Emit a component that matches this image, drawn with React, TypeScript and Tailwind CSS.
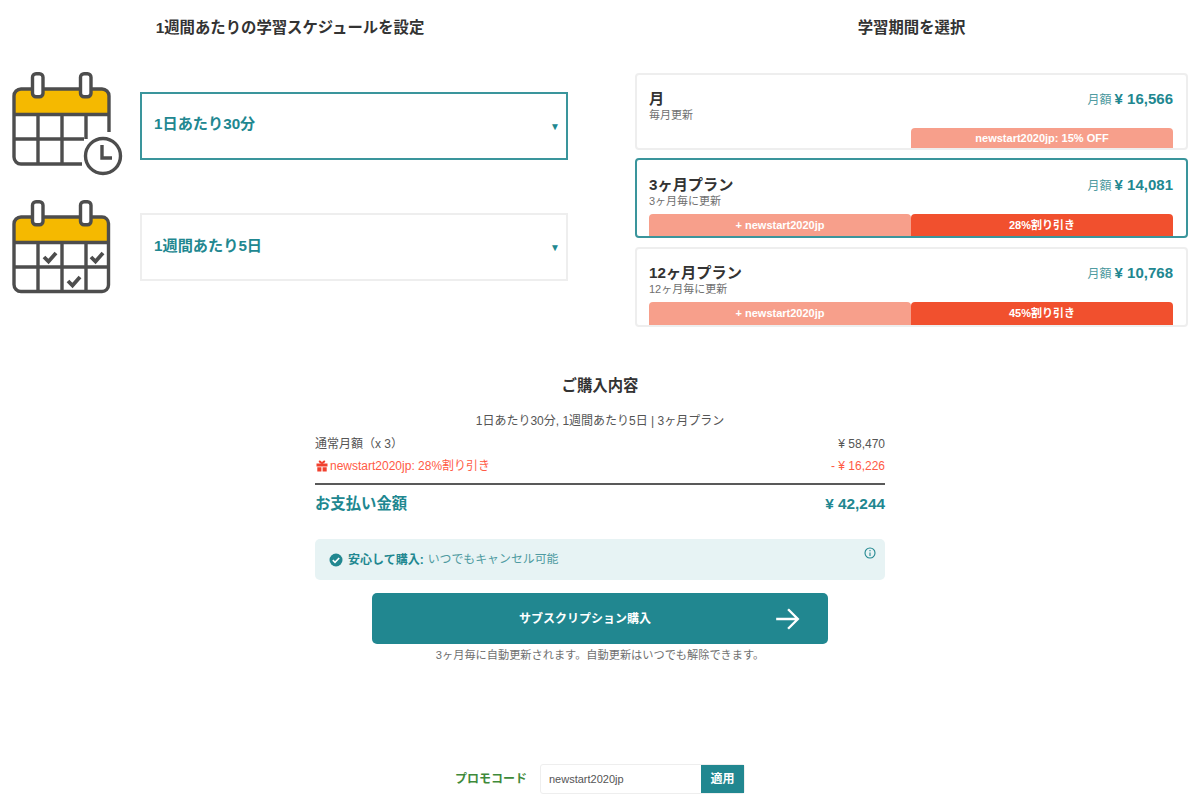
import React from "react";

const font = { fontFamily: '"Liberation Sans","Noto Sans CJK JP",sans-serif' };
const INK = "#4d4d4d";

function Pins() {
  return (
    <g fill="#fff" stroke={INK} strokeWidth="3.4">
      <rect x="20.500" y="1.700" width="10.500" height="23" rx="3.500" />
      <rect x="68.500" y="1.700" width="10.500" height="23" rx="3.500" />
    </g>
  );
}

function CalendarClock() {
  return (
    <svg viewBox="0 0 112 104" className="block w-[112px] h-[104px]" fill="none">
      <path d="M2 24 a6 6 0 0 1 6-6 H91 a6 6 0 0 1 6 6 V42 H2 Z" fill="#f5b900" />
      <g stroke={INK} strokeWidth="3.400">
        <path d="M70 92 H9 a7 7 0 0 1-7-7 V24 a7 7 0 0 1 7-7 H20 M31 17 H69 M79 17 H90 a7 7 0 0 1 7 7 V60" />
        <path d="M2 42.500 H97 M2 67 H72 M26 42.500 V92 M50 42.500 V92 M74 42.500 V67" />
      </g>
      <Pins />
      <circle cx="91" cy="84" r="17.500" fill="#fff" stroke={INK} strokeWidth="3.400" />
      <path d="M90 73 V86 H100" stroke={INK} strokeWidth="3.400" />
    </svg>
  );
}

function CalendarCheck() {
  return (
    <svg viewBox="0 0 112 104" className="block w-[112px] h-[104px]" fill="none">
      <path d="M2 24 a6 6 0 0 1 6-6 H90 a6 6 0 0 1 6 6 V42 H2 Z" fill="#f5b900" />
      <g stroke={INK} strokeWidth="3.400">
        <path d="M9 17 H20 M31 17 H69 M79 17 H90 a6.500 6.500 0 0 1 6.500 6.500 V85 a6.500 6.500 0 0 1-6.500 6.500 H9 a7 7 0 0 1-7-7 V24 a7 7 0 0 1 7-7" />
        <path d="M2 42.500 H96 M2 67 H96 M26 42.500 V92 M50 42.500 V92 M74 42.500 V92" />
      </g>
      <Pins />
      <path d="M32 57 L36.500 61.500 L44 53 M79 57 L83.500 61.500 L91 53 M56 81 L60.500 85.500 L68 77" stroke={INK} strokeWidth="3.800" />
    </svg>
  );
}

function Select({ label, active, offset, nudge }: { label: string; active?: boolean; offset: string; nudge: string }) {
  return (
    <div className={`w-[428px] h-[68px] flex items-center justify-between pl-[12px] pr-[6px] border-2 ${offset} ${active ? "border-[#3a959c]" : "border-[#eeeeee]"}`}>
      <span className={`text-[15.200px] font-bold text-[#218790] ${nudge}`}>{label}</span>
      <span className="text-[10px] text-[#218790]">▼</span>
    </div>
  );
}

function Plan({ title, sub, price, active, tags, size, strip, top }: { title: string; sub: string; price: string; active?: boolean; tags: React.ReactNode; size: string; strip: string; top: string }) {
  return (
    <div className={`relative rounded-[4px] border-2 pl-3 pr-[13px] ${size} ${active ? "border-[#3a959c]" : "border-[#eeeeee]"}`}>
      <div className={`flex justify-between ${top}`}>
        <div>
          <div className="text-[15.200px] leading-[20px] font-bold text-[#333333]">{title}</div>
          <div className="text-[11px] leading-[13px] text-[#707070]">{sub}</div>
        </div>
        <div className="flex items-baseline gap-[3px] leading-[20px] text-[#218790]">
          <span className="text-[12px] text-[#4f9ba1]">月額</span>
          <span className="text-[15px] font-bold">{price}</span>
        </div>
      </div>
      <div className={`absolute left-3 right-[13px] bottom-0 flex text-[11px] font-bold text-white ${strip}`}>{tags}</div>
    </div>
  );
}

function Tag({ children, dark, empty }: { children?: React.ReactNode; dark?: boolean; empty?: boolean }) {
  return (
    <div className={`flex-1 flex items-center justify-center rounded-t-[4px] ${empty ? "" : dark ? "bg-[#f1502e]" : "bg-[#f79f8b]"}`}>
      {children}
    </div>
  );
}

export default function App() {
  return (
    <div style={font} className="w-[1200px] h-[807px] overflow-hidden bg-white text-[#333333]">
      <div className="flex pt-[18px]">
        <div className="w-[580px] ml-[12px]">
          <h2 className="text-[15.360px] leading-[20px] font-bold text-center pr-[24px]">1週間あたりの学習スケジュールを設定</h2>
          <div className="mt-[34px] flex items-start gap-[16px]">
            <CalendarClock />
            <Select label="1日あたり30分" active offset="mt-[20px]" nudge="pb-[3px]" />
          </div>
          <div className="mt-[24px] flex items-start gap-[16px]">
            <CalendarCheck />
            <Select label="1週間あたり5日" offset="mt-[13px]" nudge="pb-[2px]" />
          </div>
        </div>
        <div className="w-[553px] ml-[43px]">
          <h2 className="text-[15.360px] leading-[20px] font-bold text-center">学習期間を選択</h2>
          <div className="mt-[35px] flex flex-col">
            <Plan title="月" sub="毎月更新" price="¥ 16,566" size="h-[77px]" strip="h-[20px]" top="pt-[14px]" tags={<><Tag empty /><Tag>newstart2020jp: 15% OFF</Tag></>} />
            <Plan title="3ヶ月プラン" sub="3ヶ月毎に更新" price="¥ 14,081" active size="h-[80px] mt-[8px]" strip="h-[22px]" top="pt-[15px]" tags={<><Tag>+ newstart2020jp</Tag><Tag dark>28%割り引き</Tag></>} />
            <Plan title="12ヶ月プラン" sub="12ヶ月毎に更新" price="¥ 10,768" size="h-[80px] mt-[9px]" strip="h-[23px]" top="pt-[14px]" tags={<><Tag>+ newstart2020jp</Tag><Tag dark>45%割り引き</Tag></>} />
          </div>
        </div>
      </div>

      <div className="w-[570px] mx-auto mt-[49px]">
        <h2 className="text-[15.360px] leading-[20px] font-bold text-center">ご購入内容</h2>
        <p className="mt-[17px] text-[12px] leading-[16px] text-center text-[#555555]">1日あたり30分, 1週間あたり5日 | 3ヶ月プラン</p>
        <div className="mt-[7px] flex justify-between text-[12px] leading-[16px] text-[#555555]">
          <span>通常月額（x 3）</span><span>¥ 58,470</span>
        </div>
        <div className="mt-[6px] flex justify-between text-[12px] leading-[16px] text-[#ff5a45] pb-[9px] border-b-2 border-[#595959]">
          <span className="flex items-center gap-[2px] pl-[1px]">
            <svg viewBox="0 0 12 12" className="w-[12px] h-[12px]" fill="#f1402e"><path d="M0.500 3.500 H11.500 V6.500 H0.500 Z M1.300 7.200 H5.400 V11.500 H1.300 Z M6.600 7.200 H10.700 V11.500 H6.600 Z M6 3.500 C3 3.700 1.800 1 3.500 0.600 C4.700 0.400 5.600 1.500 6 2.600 C6.400 1.500 7.300 0.400 8.500 0.600 C10.200 1 9 3.700 6 3.500 Z" /></svg>
            newstart2020jp: 28%割り引き
          </span>
          <span>- ¥ 16,226</span>
        </div>
        <div className="mt-[9px] flex justify-between text-[15.360px] leading-[20px] font-bold text-[#218790]">
          <span>お支払い金額</span><span>¥ 42,244</span>
        </div>
        <div className="relative mt-[25px] h-[41px] rounded-[5px] bg-[#e7f3f4] flex items-center pl-[14px] text-[12px] text-[#218790]">
          <svg viewBox="0 0 14 14" className="w-[14px] h-[14px] mr-[5px]"><circle cx="7" cy="7" r="6.500" fill="#218790" /><path d="M3.800 7.200 L6 9.300 L10.200 5" fill="none" stroke="#fff" strokeWidth="1.600" /></svg>
          <span className="font-bold mr-[4px]">安心して購入:</span>
          <span className="text-[11.900px] text-[#4f9ba1]">いつでもキャンセル可能</span>
          <svg viewBox="0 0 12 12" className="absolute right-[9px] top-[8px] w-[12px] h-[12px]" fill="none" stroke="#218790" strokeWidth="1.100"><circle cx="6" cy="6" r="5" /><path d="M6 5.500 V9 M6 3 V4.200" /></svg>
        </div>
        <div className="mx-auto mt-[13px] w-[456px] h-[51px] rounded-[5px] bg-[#218790] flex items-center justify-between pl-[147px] pr-[28px] text-white">
          <span className="text-[12px] font-bold">サブスクリプション購入</span>
          <svg viewBox="0 0 24 24" className="w-[26px] h-[26px]" fill="none" stroke="#fff" strokeWidth="2.200"><path d="M2 12 H22 M13 3 L22 12 L13 21" /></svg>
        </div>
        <p className="mt-[4px] text-[11.200px] leading-[14px] text-center text-[#707070]">3ヶ月毎に自動更新されます。自動更新はいつでも解除できます。</p>
      </div>

      <div className="mt-[102px] flex items-center justify-center">
        <span className="text-[12px] font-bold text-[#3f8a3a] mr-[13px]">プロモコード</span>
        <div className="flex h-[30px] w-[205px] rounded-[3px] border border-[#eeeeee]">
          <span className="flex-1 flex items-center pl-[8px] text-[11px] text-[#555555]">newstart2020jp</span>
          <span className="w-[43px] flex items-center justify-center bg-[#218790] text-white text-[12px] font-bold">適用</span>
        </div>
      </div>
    </div>
  );
}
